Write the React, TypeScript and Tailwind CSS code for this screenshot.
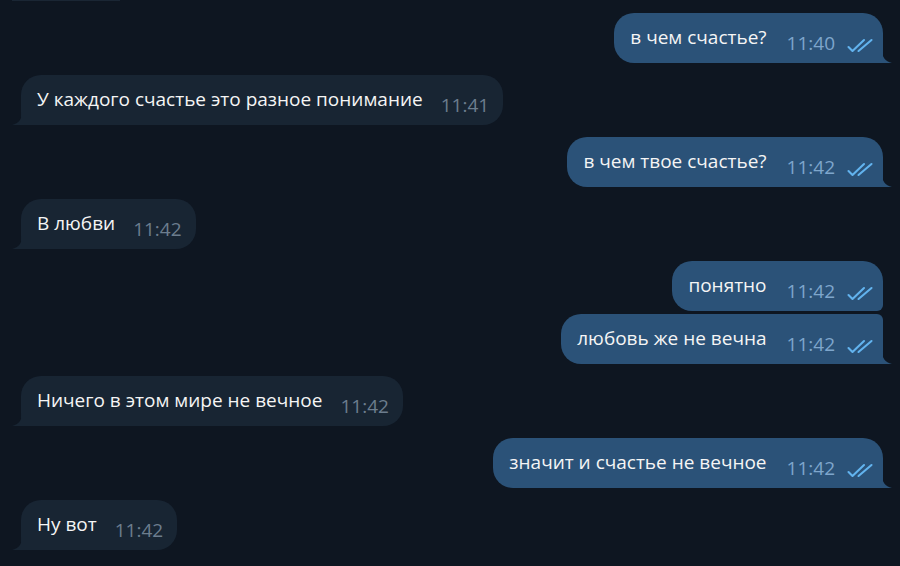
import React from 'react';

type Msg = {
    text: string;
    time: string;
    out: boolean;
    // position in a group of consecutive bubbles from the same side
    first?: boolean;
    last?: boolean;
};

const MESSAGES: Msg[] = [
    { text: 'в чем счастье?', time: '11:40', out: true },
    { text: 'У каждого счастье это разное понимание', time: '11:41', out: false },
    { text: 'в чем твое счастье?', time: '11:42', out: true },
    { text: 'В любви', time: '11:42', out: false },
    { text: 'понятно', time: '11:42', out: true, last: false },
    { text: 'любовь же не вечна', time: '11:42', out: true, first: false },
    { text: 'Ничего в этом мире не вечное', time: '11:42', out: false },
    { text: 'значит и счастье не вечное', time: '11:42', out: true },
    { text: 'Ну вот', time: '11:42', out: false },
];

function Checks() {
    return (
        <svg width="27" height="15" viewBox="0 0 27 15" fill="none" className="shrink-0">
            <path d="M1.5 9 L5.5 13 L17 2" stroke="#62b3ee" strokeWidth="2.1" strokeLinecap="round" strokeLinejoin="round" />
            <path d="M11.5 13 L24.5 2" stroke="#62b3ee" strokeWidth="2.1" strokeLinecap="round" />
        </svg>
    );
}

function Tail({ out }: { out: boolean }) {
    if (out) {
        return (
            <svg width="10" height="13" viewBox="0 0 10 13" className="absolute bottom-0 -right-[9px]">
                <path d="M0 0 C0 7 3 11.5 10 13 L0 13 Z" fill="#2b5278" />
            </svg>
        );
    }
    return (
        <svg width="10" height="13" viewBox="0 0 10 13" className="absolute bottom-0 -left-[9px]">
            <path d="M10 0 C10 7 7 11.5 0 13 L10 13 Z" fill="#182533" />
        </svg>
    );
}

function Bubble({ m }: { m: Msg }) {
    const hasTail = m.last !== false;
    const round = m.out
        ? [
              m.first === false ? 'rounded-tr-[6px]' : 'rounded-tr-[20px]',
              hasTail ? 'rounded-br-none' : 'rounded-br-[6px]',
              'rounded-tl-[20px] rounded-bl-[20px]',
          ].join(' ')
        : 'rounded-tl-[20px] rounded-tr-[20px] rounded-br-[20px] rounded-bl-none';

    return (
        <div className={m.out ? 'flex justify-end pr-[17px]' : 'flex justify-start pl-[21px]'}>
            <div
                className={`relative flex h-[50px] items-start pl-4 ${m.out ? 'bg-[#2b5278] pr-[9px]' : 'bg-[#182533] pr-[14px]'} ${round}`}
            >
                <span className="pt-[11px] text-[19px] leading-[26px] text-[#f5f5f5] whitespace-nowrap">{m.text}</span>
                <span
                    className={`mt-[17px] text-[19px] leading-[26px] whitespace-nowrap ${m.out ? 'ml-[20px] text-[#7ea6cc]' : 'ml-[18px] text-[#6c7d8e]'}`}
                >
                    {m.time}
                </span>
                {m.out && (
                    <span className="ml-[12px] mt-[25px]">
                        <Checks />
                    </span>
                )}
                {hasTail && <Tail out={m.out} />}
            </div>
        </div>
    );
}

export default function App() {
    return (
        <div
            className="h-[566px] w-[900px] overflow-hidden bg-[#0e1621]"
            style={{ fontFamily: '"Open Sans", "Noto Sans", sans-serif' }}
        >
            {/* edge of the previous message, scrolled off */}
            <div className="ml-3 h-px w-[108px] bg-[#1a2634]" />

            <div className="mt-3 flex flex-col">
                {MESSAGES.map((m, i) => (
                    <div key={i} className={i === 0 ? '' : m.first === false ? 'mt-[3px]' : 'mt-3'}>
                        <Bubble m={m} />
                    </div>
                ))}
            </div>
        </div>
    );
}
